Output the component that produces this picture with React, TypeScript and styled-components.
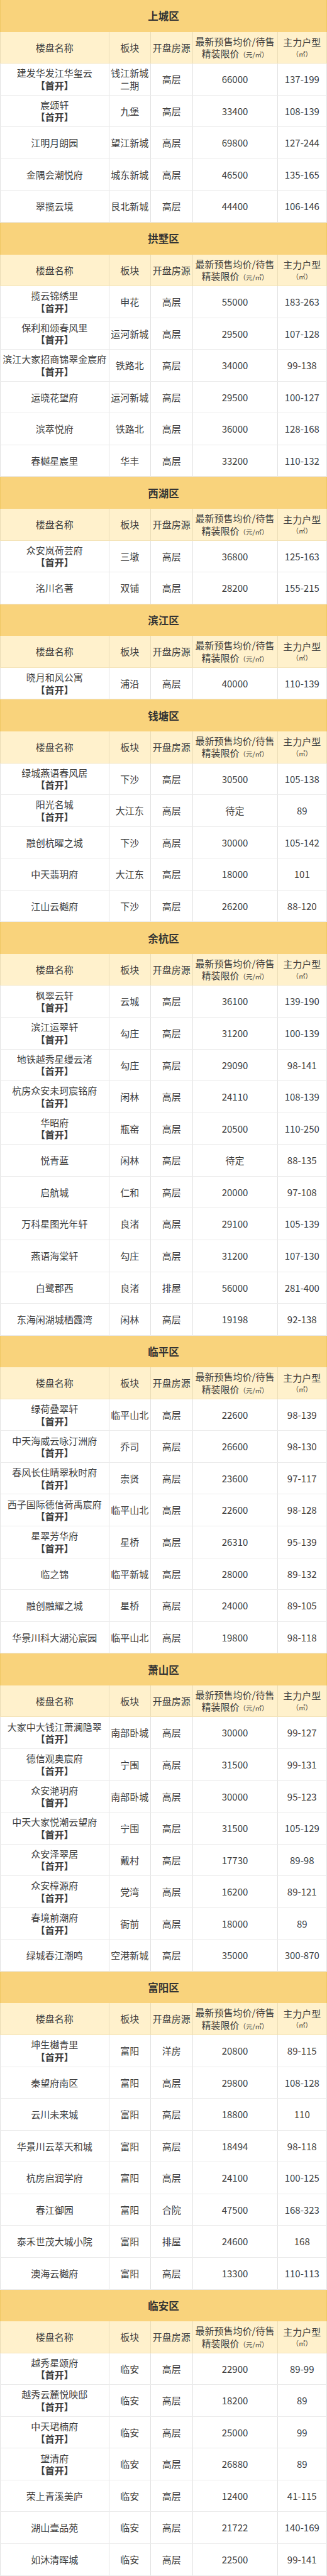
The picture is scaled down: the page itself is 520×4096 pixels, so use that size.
import React from 'react'
import styled, { createGlobalStyle } from 'styled-components'

type Item = {
  name: string
  first?: boolean
  area: string
  kind?: string
  price: string
  size: string
}

type District = {
  title: string
  items: Item[]
}

const ROW = 'calc(4096px / 81)'
const COLS = '239fr 92fr 92fr 187fr 110fr'

const GlobalStyle = createGlobalStyle`
  body {
    margin: 0;
    background: #ffffff;
    font-family: "Noto Sans CJK SC", "Noto Sans", sans-serif;
  }
`

const Table = styled.div`
  width: 520px;
  display: flex;
  flex-direction: column;
`

const TitleBar = styled.div`
  height: ${ROW};
  box-sizing: border-box;
  display: flex;
  align-items: center;
  justify-content: center;
  background: #f9d37c;
  color: #333333;
  font-size: 16.5px;
  font-weight: bold;
  border-left: 1px solid #efc766;
  border-right: 1px solid #efc766;
`

const Row = styled.div<{ $head?: boolean }>`
  height: ${ROW};
  box-sizing: border-box;
  display: grid;
  grid-template-columns: ${COLS};
  background: ${(p) => (p.$head ? '#fff1cc' : '#ffffff')};
  border-bottom: 1px solid ${(p) => (p.$head ? '#f3e3b8' : '#ebebeb')};
`

const Cell = styled.div<{ $head?: boolean }>`
  display: flex;
  flex-direction: column;
  align-items: center;
  justify-content: center;
  text-align: center;
  white-space: nowrap;
  overflow: hidden;
  font-size: 15px;
  line-height: 19.5px;
  color: #3d3d3d;
  border-left: 1px solid ${(p) => (p.$head ? '#eadcb6' : '#e2e2e2')};
  &:last-child {
    border-right: 1px solid ${(p) => (p.$head ? '#eadcb6' : '#e2e2e2')};
  }
`

const Tag = styled.span`
  font-weight: bold;
`

const Unit = styled.span`
  font-size: 10.5px;
  line-height: 17px;
`

const data: District[] = [
  {
    title: '上城区',
    items: [
      { name: '建发华发江华玺云', first: true, area: '钱江新城\n二期', price: '66000', size: '137-199' },
      { name: '宸颂轩', first: true, area: '九堡', price: '33400', size: '108-139' },
      { name: '江明月朗园', area: '望江新城', price: '69800', size: '127-244' },
      { name: '金隅会潮悦府', area: '城东新城', price: '46500', size: '135-165' },
      { name: '翠揽云境', area: '艮北新城', price: '44400', size: '106-146' },
    ],
  },
  {
    title: '拱墅区',
    items: [
      { name: '揽云锦绣里', first: true, area: '申花', price: '55000', size: '183-263' },
      { name: '保利和颂春风里', first: true, area: '运河新城', price: '29500', size: '107-128' },
      { name: '滨江大家招商锦翠金宸府', first: true, area: '铁路北', price: '34000', size: '99-138' },
      { name: '运晓花望府', area: '运河新城', price: '29500', size: '100-127' },
      { name: '滨萃悦府', area: '铁路北', price: '36000', size: '128-168' },
      { name: '春樾星宸里', area: '华丰', price: '33200', size: '110-132' },
    ],
  },
  {
    title: '西湖区',
    items: [
      { name: '众安岚荷芸府', first: true, area: '三墩', price: '36800', size: '125-163' },
      { name: '洺川名著', area: '双铺', price: '28200', size: '155-215' },
    ],
  },
  {
    title: '滨江区',
    items: [{ name: '晓月和风公寓', first: true, area: '浦沿', price: '40000', size: '110-139' }],
  },
  {
    title: '钱塘区',
    items: [
      { name: '绿城燕语春风居', first: true, area: '下沙', price: '30500', size: '105-138' },
      { name: '阳光名城', first: true, area: '大江东', price: '待定', size: '89' },
      { name: '融创杭曜之城', area: '下沙', price: '30000', size: '105-142' },
      { name: '中天翡玥府', area: '大江东', price: '18000', size: '101' },
      { name: '江山云樾府', area: '下沙', price: '26200', size: '88-120' },
    ],
  },
  {
    title: '余杭区',
    items: [
      { name: '枫翠云轩', first: true, area: '云城', price: '36100', size: '139-190' },
      { name: '滨江运翠轩', first: true, area: '勾庄', price: '31200', size: '100-139' },
      { name: '地铁越秀星缦云渚', first: true, area: '勾庄', price: '29090', size: '98-141' },
      { name: '杭房众安未珂宸铭府', first: true, area: '闲林', price: '24110', size: '108-139' },
      { name: '华昭府', first: true, area: '瓶窑', price: '20500', size: '110-250' },
      { name: '悦青蓝', area: '闲林', price: '待定', size: '88-135' },
      { name: '启航城', area: '仁和', price: '20000', size: '97-108' },
      { name: '万科星图光年轩', area: '良渚', price: '29100', size: '105-139' },
      { name: '燕语海棠轩', area: '勾庄', price: '31200', size: '107-130' },
      { name: '白鹭郡西', area: '良渚', kind: '排屋', price: '56000', size: '281-400' },
      { name: '东海闲湖城栖霞湾', area: '闲林', price: '19198', size: '92-138' },
    ],
  },
  {
    title: '临平区',
    items: [
      { name: '绿荷叠翠轩', first: true, area: '临平山北', price: '22600', size: '98-139' },
      { name: '中天海威云咏汀洲府', first: true, area: '乔司', price: '26600', size: '98-130' },
      { name: '春风长住晴翠秋时府', first: true, area: '崇贤', price: '23600', size: '97-117' },
      { name: '西子国际德信荷禹宸府', first: true, area: '临平山北', price: '22600', size: '98-128' },
      { name: '星翠芳华府', first: true, area: '星桥', price: '26310', size: '95-139' },
      { name: '临之锦', area: '临平新城', price: '28000', size: '89-132' },
      { name: '融创融耀之城', area: '星桥', price: '24000', size: '89-105' },
      { name: '华景川科大湖沁宸园', area: '临平山北', price: '19800', size: '98-118' },
    ],
  },
  {
    title: '萧山区',
    items: [
      { name: '大家中大钱江萧澜隐翠', first: true, area: '南部卧城', price: '30000', size: '99-127' },
      { name: '德信观奥宸府', first: true, area: '宁围', price: '31500', size: '99-131' },
      { name: '众安滟玥府', first: true, area: '南部卧城', price: '30000', size: '95-123' },
      { name: '中天大家悦潮云望府', first: true, area: '宁围', price: '31500', size: '105-129' },
      { name: '众安泽翠居', first: true, area: '戴村', price: '17730', size: '89-98' },
      { name: '众安樟源府', first: true, area: '党湾', price: '16200', size: '89-121' },
      { name: '春境前潮府', first: true, area: '衙前', price: '18000', size: '89' },
      { name: '绿城春江潮鸣', area: '空港新城', price: '35000', size: '300-870' },
    ],
  },
  {
    title: '富阳区',
    items: [
      { name: '坤生樾青里', first: true, area: '富阳', kind: '洋房', price: '20800', size: '89-115' },
      { name: '秦望府南区', area: '富阳', price: '29800', size: '108-128' },
      { name: '云川未来城', area: '富阳', price: '18800', size: '110' },
      { name: '华景川云萃天和城', area: '富阳', price: '18494', size: '98-118' },
      { name: '杭房启润学府', area: '富阳', price: '24100', size: '100-125' },
      { name: '春江御园', area: '富阳', kind: '合院', price: '47500', size: '168-323' },
      { name: '泰禾世茂大城小院', area: '富阳', kind: '排屋', price: '24600', size: '168' },
      { name: '澳海云樾府', area: '富阳', price: '13300', size: '110-113' },
    ],
  },
  {
    title: '临安区',
    items: [
      { name: '越秀星颂府', first: true, area: '临安', price: '22900', size: '89-99' },
      { name: '越秀云麓悦映邸', first: true, area: '临安', price: '18200', size: '89' },
      { name: '中天珺楠府', first: true, area: '临安', price: '25000', size: '99' },
      { name: '望清府', first: true, area: '临安', price: '26880', size: '89' },
      { name: '荣上青溪美庐', area: '临安', price: '12400', size: '41-115' },
      { name: '湖山壹品苑', area: '临安', price: '21722', size: '140-169' },
      { name: '如沐清晖城', area: '临安', price: '22500', size: '99-141' },
    ],
  },
]

const HeaderRow = () => (
  <Row $head>
    <Cell $head>楼盘名称</Cell>
    <Cell $head>板块</Cell>
    <Cell $head>开盘房源</Cell>
    <Cell $head>
      <span>最新预售均价/待售</span>
      <span>
        精装限价<Unit>（元/㎡）</Unit>
      </span>
    </Cell>
    <Cell $head>
      <span>主力户型</span>
      <Unit>（㎡）</Unit>
    </Cell>
  </Row>
)

const ItemRow = ({ item }: { item: Item }) => (
  <Row>
    <Cell>
      <span>{item.name}</span>
      {item.first && <Tag>【首开】</Tag>}
    </Cell>
    <Cell>
      {item.area.split('\n').map((line) => (
        <span key={line}>{line}</span>
      ))}
    </Cell>
    <Cell>{item.kind || '高层'}</Cell>
    <Cell>{item.price}</Cell>
    <Cell>{item.size}</Cell>
  </Row>
)

const App = () => {
  return (
    <>
      <GlobalStyle />
      <Table>
        {data.map((d) => (
          <React.Fragment key={d.title}>
            <TitleBar>{d.title}</TitleBar>
            <HeaderRow />
            {d.items.map((item) => (
              <ItemRow key={item.name} item={item} />
            ))}
          </React.Fragment>
        ))}
      </Table>
    </>
  )
}

export default App
